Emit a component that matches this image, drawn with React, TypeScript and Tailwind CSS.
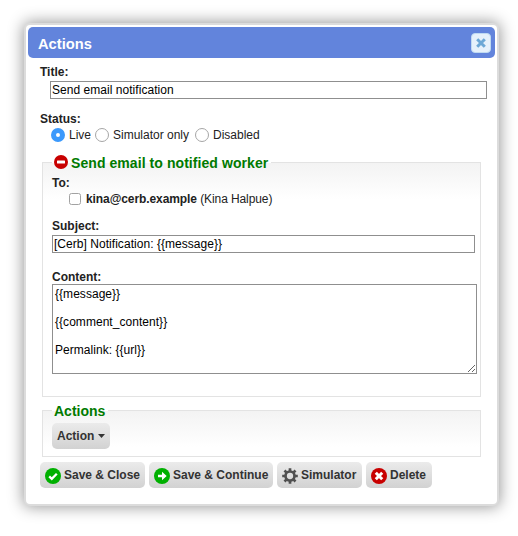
import type { ReactNode } from 'react';

function Label({ children, className = '' }: { children: ReactNode; className?: string }) {
  return <div className={`h-[14px] text-xs leading-[14px] font-bold whitespace-nowrap text-[#222] ${className}`}>{children}</div>;
}

function Radio({ label, name, checked = false, className }: { label: string; name: string; checked?: boolean; className: string }) {
  return (
    <label className={`flex h-[14px] items-center whitespace-nowrap ${className}`}>
      <input
        type="radio"
        name={name}
        defaultChecked={checked}
        className="m-0 size-[14px] shrink-0 appearance-none rounded-full border border-[#a6a6a6] bg-white checked:border-[5px] checked:border-[#3b99fc]"
      />
      <span className="ml-1 text-xs leading-[14px] text-[#222]">{label}</span>
    </label>
  );
}

function Button({ children, className }: { children: ReactNode; className: string }) {
  return (
    <button className={`flex h-[26px] shrink-0 items-center rounded-[5px] bg-linear-to-b from-[#ebebeb] to-[#d2d2d2] pl-[5px] text-xs leading-[14px] font-bold whitespace-nowrap text-[#333] ${className}`}>
      {children}
    </button>
  );
}

function CircleIcon({ color, children }: { color: string; children: ReactNode }) {
  return (
    <svg className="mt-[1px] mr-[3px] size-4 shrink-0" viewBox="0 0 16 16" fill="none">
      <circle cx="8" cy="8" r="8" fill={color} />
      {children}
    </svg>
  );
}

export default function App() {
  return (
    <div className="h-[536px] w-[518px] overflow-hidden bg-white pt-[23px] pl-6 font-['Liberation_Sans',Arial,sans-serif] text-xs">
      <div className="h-[483px] w-[475px] rounded-md border-2 border-[#dcdcdc] bg-white px-[2px] pt-[2px] shadow-[0_0_15px_1px_#999]">
        <div className="flex h-[31px] w-[467px] items-center justify-between rounded-[5px] bg-[#6284dc] pr-1 pl-[10px]">
          <span className="mt-[2px] text-[14.7px] leading-4 font-bold text-white">Actions</span>
          <button className="flex size-5 items-center justify-center rounded border border-[#bfdaf2] bg-[#e6f1fb]">
            <svg className="size-[10px]" viewBox="0 0 10 10" stroke="#6da8d6" strokeWidth="3">
              <path d="M1.2 1.2 8.8 8.8M8.8 1.2 1.2 8.8" />
            </svg>
          </button>
        </div>

        <div className="pt-[7px] pl-3">
          <Label>Title:</Label>
          <input className="mt-[2px] ml-[10px] block h-[18px] w-[437px] border border-[#8f8f8f] bg-white px-px text-xs leading-[14px] tracking-[.04px] text-black" defaultValue="Send email notification" />
          <Label className="mt-[13px]">Status:</Label>
          <div className="mt-[2px] flex pl-[11px]">
            <Radio name="status" label="Live" checked className="w-11" />
            <Radio name="status" label="Simulator only" className="w-[100px]" />
            <Radio name="status" label="Disabled" className="w-[80px]" />
          </div>

          <fieldset className="mt-[11px] ml-[2px] h-[244px] w-[439px] min-w-0 border border-[#e3e3e3] bg-[linear-gradient(#f3f3f3,#fff_36px)] px-[9px]">
            <legend className="flex h-[19px] items-center pr-[3px] pl-[2px] text-[14px] leading-[18px] font-bold tracking-[.07px] whitespace-nowrap text-[#007a00]">
              <svg className="mt-[-2px] mr-[3px] size-[14px]" viewBox="0 0 14 14">
                <circle cx="7" cy="7" r="7" fill="#c80000" />
                <rect x="3" y="5.6" width="8" height="2.8" rx=".5" fill="#fff" />
              </svg>
              <span>Send email to notified worker</span>
            </legend>
            <div className="w-[425px] pt-[4px]">
              <Label>To:</Label>
              <label className="mt-[2px] flex h-[14px] items-center pl-[17px] whitespace-nowrap text-[#222]">
                <input type="checkbox" className="m-0 size-3 appearance-none rounded-[2.5px] border border-[#a2a2a2] bg-white" />
                <span className="ml-[5px] leading-[14px] tracking-[-.09px]"><b>kina@cerb.example</b> (Kina Halpue)</span>
              </label>
              <Label className="mt-[13px]">Subject:</Label>
              <input className="mt-[2px] block h-[18px] w-[423px] border border-[#8f8f8f] bg-white px-px text-xs leading-[14px] tracking-[.04px] text-black" defaultValue="[Cerb] Notification: {{message}}" />
              <Label className="mt-[17px]">Content:</Label>
              <div className="relative h-[90px] w-[425px]">
                <textarea className="block h-[90px] w-[425px] resize-none border border-[#8f8f8f] bg-white px-[2px] py-[2px] text-xs leading-[14px] tracking-[.04px] text-black" defaultValue={'{{message}}\n\n{{comment_content}}\n\nPermalink: {{url}}'} />
                <svg className="absolute right-[2px] bottom-[2px] size-[7px]" viewBox="0 0 7 7" stroke="#555" strokeWidth=".9">
                  <path d="M0 7 7 0M4 7 7 4" />
                </svg>
              </div>
            </div>
          </fieldset>

          <fieldset className="mt-[5px] ml-[2px] h-[55px] w-[439px] min-w-0 border border-[#e3e3e3] bg-[linear-gradient(#f3f3f3,#fff_36px)] px-[9px]">
            <legend className="h-[17px] pr-[3px] pl-[2px] text-[14px] leading-[18px] font-bold text-[#007a00]">Actions</legend>
            <Button className="mt-1 w-[58px]">
              <span>Action</span>
              <svg className="ml-1 h-1 w-[7px]" viewBox="0 0 7 4"><path d="M0 0h7L3.5 4z" fill="#333" /></svg>
            </Button>
          </fieldset>

          <div className="mt-[5px] flex gap-1">
            <Button className="w-[105px]">
              <CircleIcon color="#00b000"><path d="m4.2 8.3 2.6 2.5 5-5" stroke="#fff" strokeWidth="2.3" /></CircleIcon>
              <span>Save &amp; Close</span>
            </Button>
            <Button className="w-[124px]">
              <CircleIcon color="#00b000"><path d="M4 6.7h4V3.8L12.7 8 8 12.2V9.3H4z" fill="#fff" /></CircleIcon>
              <span>Save &amp; Continue</span>
            </Button>
            <Button className="w-[85px]">
              <svg className="mt-[1px] mr-[3px] size-4 shrink-0" viewBox="0 0 16 16" fill="none" stroke="#505050">
                <circle cx="8" cy="8" r="4.5" strokeWidth="2.7" />
                <path d="M8 .2v3M8 12.8v3M.2 8h3M12.8 8h3M2.5 2.5l2.1 2.1M11.4 11.4l2.1 2.1M13.5 2.5l-2.1 2.1M4.6 11.4l-2.1 2.1" strokeWidth="2.7" />
              </svg>
              <span>Simulator</span>
            </Button>
            <Button className="w-[66px]">
              <CircleIcon color="#c80000"><path d="m4.8 4.8 6.4 6.4m0-6.4-6.4 6.4" stroke="#fff" strokeWidth="3" /></CircleIcon>
              <span>Delete</span>
            </Button>
          </div>
        </div>
      </div>
    </div>
  );
}
